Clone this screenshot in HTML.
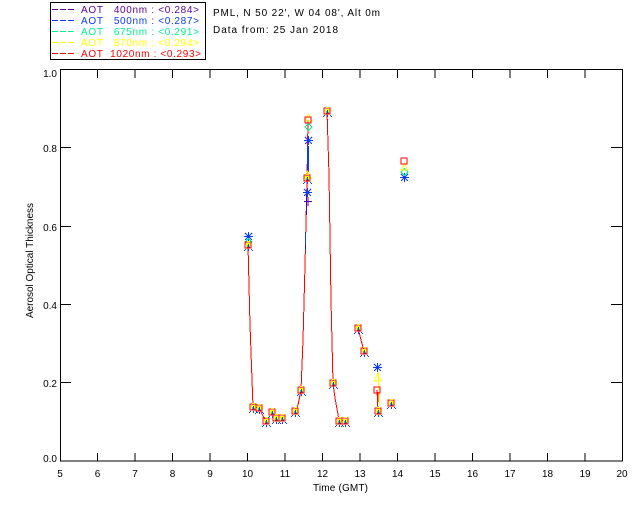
<!DOCTYPE html>
<html><head><meta charset="utf-8"><style>
html,body{margin:0;padding:0;background:#fff;width:640px;height:512px;overflow:hidden}
svg{display:block}
text{font-family:"Liberation Sans",sans-serif;font-size:10px;fill:#000}
</style></head><body>
<svg width="640" height="512" viewBox="0 0 640 512" xmlns="http://www.w3.org/2000/svg">
<defs>
<g id="st" stroke="#0a3cf0" fill="none" shape-rendering="crispEdges"><path d="M-4 .5H5M.5 -4V5M-3 -3L4 4M-3 4L4 -3"/></g>
<g id="di" stroke="#00f08c" fill="none" shape-rendering="crispEdges"><path d="M.5 -3.5L4 0L.5 3.5L-3 0Z"/></g>
<g id="tr" stroke="#ffff00" fill="none" shape-rendering="crispEdges"><path d="M.5 -4L4 3H-3Z"/></g>
<rect id="sq" x="-3" y="-3" width="6" height="6" fill="none" stroke="#f00" shape-rendering="crispEdges"/>
<g id="m" shape-rendering="crispEdges">
<path d="M-3 4.500h1M0 4.500h1M3 4.500h1M-4 5.500h1M0 5.500h1M4 5.500h1" stroke="#0a3cf0" fill="none"/>
<rect x="-2" y="-2" width="5" height="5" fill="#ffff00"/>
<path d="M.5 -1V3M-1 2H2" stroke="#0a3cf0" fill="none"/>
<path d="M-1 .5h1" stroke="#00f08c" fill="none"/>
<rect x="-3" y="-3" width="6" height="6" fill="none" stroke="#f00"/>
<path d="M-1 -3.500h3" stroke="#ffff00" fill="none"/>
</g>
</defs>
<!-- legend -->
<rect x="50.5" y="2.500" width="155" height="57" fill="none" stroke="#000" shape-rendering="crispEdges"/>
<g stroke-dasharray="6 2" shape-rendering="crispEdges">
<path d="M52 9.500H76" stroke="#5a0096"/><path d="M52 20.500H76" stroke="#0a3cf0"/><path d="M52 31.500H76" stroke="#00f08c"/><path d="M52 42.500H76" stroke="#ffff00"/><path d="M52 53.500H76" stroke="#f00"/>
</g>
<text x="81" y="13" style="fill:#5a0096" textLength="118" lengthAdjust="spacing" xml:space="preserve">AOT   400nm : &lt;0.284&gt;</text>
<text x="81" y="24" style="fill:#0a3cf0" textLength="118" lengthAdjust="spacing" xml:space="preserve">AOT   500nm : &lt;0.287&gt;</text>
<text x="81" y="35" style="fill:#00f08c" textLength="118" lengthAdjust="spacing" xml:space="preserve">AOT   675nm : &lt;0.291&gt;</text>
<text x="81" y="46" style="fill:#ffff00" textLength="118" lengthAdjust="spacing" xml:space="preserve">AOT   870nm : &lt;0.294&gt;</text>
<text x="81" y="57" style="fill:#f00" textLength="120" lengthAdjust="spacing" xml:space="preserve">AOT  1020nm : &lt;0.293&gt;</text>
<text x="213" y="16" textLength="167" lengthAdjust="spacing">PML, N 50 22', W 04 08', Alt 0m</text>
<text x="213" y="33" textLength="125" lengthAdjust="spacing">Data from: 25 Jan 2018</text>
<!-- axes -->
<g fill="none" stroke="#000" shape-rendering="crispEdges">
<rect x="60.500" y="69.500" width="562" height="391.500"/>
<path d="M97.500 461V453M135 461V453M172.500 461V453M210 461V453M247.500 461V453M285 461V453M322.500 461V453M360 461V453M397.500 461V453M435 461V453M472.500 461V453M510 461V453M547.500 461V453M585 461V453"/>
<path d="M97.500 70V78M135 70V78M172.500 70V78M210 70V78M247.500 70V78M285 70V78M322.500 70V78M360 70V78M397.500 70V78M435 70V78M472.500 70V78M510 70V78M547.500 70V78M585 70V78"/>
<path d="M61 147.500H71M61 226.500H71M61 304.500H71M61 382.500H71M622 147.500H611M622 226.500H611M622 304.500H611M622 382.500H611"/>
</g>
<g text-anchor="end">
<text x="57" y="77">1.0</text><text x="57" y="152">0.8</text><text x="57" y="231">0.6</text><text x="57" y="309">0.4</text><text x="57" y="387">0.2</text><text x="57" y="462">0.0</text>
</g>
<g text-anchor="middle">
<text x="60" y="477">5</text><text x="97.500" y="477">6</text><text x="135" y="477">7</text><text x="172.500" y="477">8</text><text x="210" y="477">9</text><text x="247.500" y="477">10</text><text x="285" y="477">11</text><text x="322.500" y="477">12</text><text x="360" y="477">13</text><text x="397.500" y="477">14</text><text x="435" y="477">15</text><text x="472.500" y="477">16</text><text x="510" y="477">17</text><text x="547.500" y="477">18</text><text x="585" y="477">19</text><text x="622" y="477">20</text>
</g>
<text x="313" y="491" textLength="55" lengthAdjust="spacing">Time (GMT)</text>
<text transform="translate(33 318) rotate(-90)" textLength="115" lengthAdjust="spacing">Aerosol Optical Thickness</text>
<!-- data lines -->
<g fill="none" shape-rendering="crispEdges">
<path d="M248 245L250 325L253 407L259 408L263 416L266 421M295 411L298 405L301 390L303 340L305 265L307 179L308 120M327 111L329 175L331 300L333 383L335 398L339 420L345 421M358 328L361 340L364 351M377 390L378 411" stroke="#f00"/>
<path d="M308.500 146V172M307.500 146V172" stroke="#0a3cf0"/>
<path d="M306.500 195V215" stroke="#5a0096"/>
<path d="M305.500 232V250" stroke="#0a3cf0"/>
<path d="M305.500 245V248" stroke="#5a0096"/>
<path d="M378.500 372V390M379.500 392V405" stroke="#ffff00"/>
<path d="M378 392V402" stroke="#f00"/>
</g>
<!-- purple plus -->
<path d="M304 201.500H312M308 197V206" stroke="#5a0096" fill="none" shape-rendering="crispEdges"/>
<!-- upper markers -->
<use href="#st" x="248" y="236"/><use href="#di" x="248" y="242"/>
<use href="#st" x="308" y="140"/><use href="#di" x="308" y="127"/><use href="#tr" x="308" y="118"/>
<use href="#st" x="307" y="192"/><use href="#tr" x="307" y="175"/>
<use href="#st" x="377" y="367"/><use href="#tr" x="377" y="378"/>
<use href="#st" x="404" y="177"/><use href="#di" x="404" y="172"/><use href="#tr" x="404" y="167"/>
<!-- squares -->
<use href="#m" x="248" y="245"/><use href="#sq" x="308" y="120"/><use href="#m" x="307" y="178"/><use href="#m" x="327" y="111"/>
<use href="#sq" x="377" y="390"/><use href="#sq" x="404" y="161"/>
<use href="#m" x="253" y="407"/><use href="#m" x="259" y="408"/><use href="#m" x="266" y="421"/><use href="#m" x="272" y="412"/><use href="#m" x="276" y="418"/><use href="#m" x="282" y="418"/><use href="#m" x="295" y="411"/><use href="#m" x="301" y="390"/><use href="#m" x="333" y="383"/><use href="#m" x="339" y="421"/><use href="#m" x="345" y="421"/><use href="#m" x="358" y="328"/><use href="#m" x="364" y="351"/><use href="#m" x="378" y="411"/><use href="#m" x="391" y="403"/>
</svg>
</body></html>
